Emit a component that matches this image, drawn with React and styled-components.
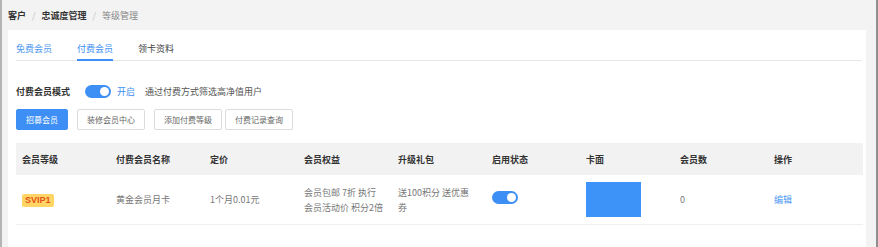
import React from "react";
import styled, { createGlobalStyle } from "styled-components";

const Global = createGlobalStyle`
  html, body { margin: 0; padding: 0; background: #f3f3f3; }
  * { box-sizing: border-box; }
  body { font-family: "Noto Sans CJK SC", "Liberation Sans", sans-serif; }
`;

const Page = styled.div`
  width: 878px;
  height: 247px;
  overflow: hidden;
  background: #f3f3f3;
  border-left: 2px solid #b4b4b4;
  border-right: 2px solid #8f8f8f;
`;

const Crumbs = styled.div`
  height: 30px;
  padding-left: 6px;
  display: flex;
  align-items: center;
  gap: 6px;
  font-size: 9px;
  color: #999;
`;

const Crumb = styled.span`
  color: ${p => (p.$current ? "#888" : "#333")};
  font-weight: ${p => (p.$current ? 400 : 700)};
`;

const Sep = styled.span`
  color: #c4c4c4;
`;

const Panel = styled.section`
  margin-left: 6px;
  width: 858px;
  height: 217px;
  background: #fff;
  padding: 0 4px 0 8px;
`;

const Tabs = styled.div`
  height: 31px;
  display: flex;
  gap: 25px;
  border-bottom: 1px solid #e6e6e6;
`;

const Tab = styled.div`
  font-size: 9px;
  padding-top: 12px;
  color: ${p => (p.$active ? "#3d8ff5" : p.$blue ? "#4a97f2" : "#444")};
  border-bottom: 2px solid ${p => (p.$active ? "#3d8ff5" : "transparent")};
  margin-bottom: -1px;
`;

const ModeRow = styled.div`
  display: flex;
  align-items: center;
  height: 18px;
  margin-top: 21px;
  font-size: 9px;
`;

const ModeLabel = styled.span`
  color: #333;
  font-weight: 700;
  margin-right: 15px;
`;

const Toggle = styled.span`
  width: 26px;
  height: 13px;
  border-radius: 7px;
  background: #3d8ff5;
  position: relative;
  display: inline-block;
  &::after {
    content: "";
    position: absolute;
    right: 2px;
    top: 2px;
    width: 9px;
    height: 9px;
    border-radius: 50%;
    background: #fff;
  }
`;

const OnText = styled.span`
  color: #3d8ff5;
  margin: 0 10px 0 6px;
`;

const Hint = styled.span`
  color: #555;
`;

const Buttons = styled.div`
  display: flex;
  margin-top: 9px;
`;

const Button = styled.div`
  height: 21px;
  padding: 0 9px;
  margin-right: ${p => (p.$gap ?? 9)}px;
  display: flex;
  align-items: center;
  font-size: 8px;
  border-radius: 2px;
  border: 1px solid ${p => (p.$primary ? "#3d8ff5" : "#dcdcdc")};
  background: ${p => (p.$primary ? "#3d8ff5" : "#fff")};
  color: ${p => (p.$primary ? "#fff" : "#666")};
`;

const Table = styled.div`
  margin-top: 13px;
  width: 847px;
`;

const Row = styled.div`
  display: grid;
  grid-template-columns: repeat(9, 94px);
  align-items: center;
  height: ${p => (p.$head ? 32 : 50)}px;
  background: ${p => (p.$head ? "#f2f2f2" : "#fff")};
  border-bottom: ${p => (p.$head ? "none" : "1px solid #f0f0f0")};
  font-size: 9px;
  color: ${p => (p.$head ? "#333" : "#777")};
  font-weight: ${p => (p.$head ? 700 : 400)};
`;

const Cell = styled.div`
  padding-left: 6px;
  line-height: 15px;
  color: ${p => p.$color || "inherit"};
`;

const Badge = styled.span`
  display: inline-block;
  background: #ffd666;
  color: #e4531a;
  font-weight: 700;
  font-family: "Liberation Sans", sans-serif;
  font-size: 9px;
  line-height: 13px;
  padding: 0 3px;
  border-radius: 2px;
`;

const CardFace = styled.div`
  width: 55px;
  height: 35px;
  background: #3d93f8;
`;

export default function App() {
  return (
    <Page>
      <Global />
      <Crumbs>
        <Crumb>客户</Crumb>
        <Sep>/</Sep>
        <Crumb>忠诚度管理</Crumb>
        <Sep>/</Sep>
        <Crumb $current>等级管理</Crumb>
      </Crumbs>
      <Panel>
        <Tabs>
          <Tab $blue>免费会员</Tab>
          <Tab $active>付费会员</Tab>
          <Tab>领卡资料</Tab>
        </Tabs>
        <ModeRow>
          <ModeLabel>付费会员模式</ModeLabel>
          <Toggle />
          <OnText>开启</OnText>
          <Hint>通过付费方式筛选高净值用户</Hint>
        </ModeRow>
        <Buttons>
          <Button $primary>招募会员</Button>
          <Button>装修会员中心</Button>
          <Button $gap={3}>添加付费等级</Button>
          <Button>付费记录查询</Button>
        </Buttons>
        <Table>
          <Row $head>
            <Cell>会员等级</Cell>
            <Cell>付费会员名称</Cell>
            <Cell>定价</Cell>
            <Cell>会员权益</Cell>
            <Cell>升级礼包</Cell>
            <Cell>启用状态</Cell>
            <Cell>卡面</Cell>
            <Cell>会员数</Cell>
            <Cell>操作</Cell>
          </Row>
          <Row>
            <Cell><Badge>SVIP1</Badge></Cell>
            <Cell>黄金会员月卡</Cell>
            <Cell>1个月0.01元</Cell>
            <Cell>会员包邮 7折 执行<br />会员活动价 积分2倍</Cell>
            <Cell>送100积分 送优惠<br />券</Cell>
            <Cell><Toggle /></Cell>
            <Cell><CardFace /></Cell>
            <Cell>0</Cell>
            <Cell $color="#4a97f2">编辑</Cell>
          </Row>
        </Table>
      </Panel>
    </Page>
  );
}
